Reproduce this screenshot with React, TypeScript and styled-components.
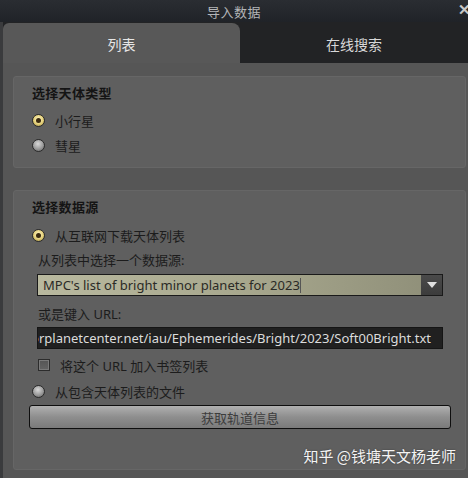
import React from "react";
import styled, { createGlobalStyle } from "styled-components";

const Global = createGlobalStyle`
  html, body { margin: 0; padding: 0; background: #4b4b4b; }
  body { font-family: "Noto Sans", "Noto Sans CJK SC", sans-serif; }
`;

const Frame = styled.div`
  position: relative;
  width: 468px;
  height: 478px;
  overflow: hidden;
  display: flex;
  flex-direction: column;
  background: #4c4c4c;
`;

const TitleBar = styled.div`
  height: 22px;
  flex: none;
  display: grid;
  grid-template-columns: 1fr auto 1fr;
  align-items: center;
  background: linear-gradient(#2a2d32, #202328);
  color: #b4b6b8;
  font-size: 13px;
`;

const Title = styled.div`
  grid-column: 2;
  letter-spacing: 0.5px;
  padding-top: 1px;
`;

const Close = styled.div`
  grid-column: 3;
  justify-self: end;
  margin-right: -3px;
  margin-top: -4px;
  color: #c8c8c8;
  font-size: 15px;
  font-weight: bold;
`;

const Body = styled.div`
  flex: 1;
  display: flex;
  border-left: 3px solid #3a3b3d;
  background: #202224;
`;

const Main = styled.div`
  flex: 1;
  display: flex;
  flex-direction: column;
`;

const TabBar = styled.div`
  height: 41px;
  flex: none;
  display: flex;
  background: #222325;
`;

const Tab = styled.div<{ $active?: boolean }>`
  width: ${(p) => (p.$active ? "237px" : "auto")};
  flex: ${(p) => (p.$active ? "none" : "1")};
  margin-top: ${(p) => (p.$active ? "1px" : "0")};
  display: flex;
  align-items: center;
  justify-content: center;
  font-size: 14px;
  color: ${(p) => (p.$active ? "#e6e6e6" : "#d8d8d8")};
  background: ${(p) => (p.$active ? "#585858" : "#222325")};
  border-radius: ${(p) => (p.$active ? "6px 8px 0 0" : "0")};
  padding-top: 2px;
`;

const Content = styled.div`
  flex: 1;
  background: #565656;
  padding: 13px 2px 8px 10px;
  display: flex;
  flex-direction: column;
  gap: 22px;
`;

const Group = styled.div<{ $grow?: boolean }>`
  background: #5f5f5f;
  border: 1px solid #666;
  border-radius: 3px;
  padding: 7px 0 0 0;
  display: flex;
  flex-direction: column;
  flex: ${(p) => (p.$grow ? "1" : "none")};
  height: ${(p) => (p.$grow ? "auto" : "92px")};
  box-sizing: border-box;
`;

const GroupTitle = styled.div`
  height: 18px;
  line-height: 18px;
  margin-left: 18px;
  font-size: 13px;
  font-weight: bold;
  color: #141414;
  letter-spacing: 0.3px;
`;

const Row = styled.div<{ $h: number; $mt?: number; $indent: number }>`
  height: ${(p) => p.$h}px;
  margin-top: ${(p) => p.$mt ?? 0}px;
  margin-left: ${(p) => p.$indent}px;
  display: flex;
  align-items: center;
  gap: 10px;
  font-size: 13px;
  color: #1c1c1c;
`;

const Radio = styled.span<{ $on?: boolean }>`
  width: 13px;
  height: 13px;
  border-radius: 50%;
  box-sizing: border-box;
  flex: none;
  display: inline-flex;
  align-items: center;
  justify-content: center;
  border: 1px solid #2a2a2a;
  background: ${(p) =>
    p.$on
      ? "radial-gradient(circle at 50% 40%, #fff8c8 0%, #e4cf78 55%, #8a7a38 100%)"
      : "radial-gradient(circle at 45% 35%, #d8d8d8 0%, #9a9a9a 55%, #5a5a5a 100%)"};
  &::after {
    content: "";
    display: ${(p) => (p.$on ? "block" : "none")};
    width: 5px;
    height: 5px;
    border-radius: 50%;
    background: #3a2a10;
  }
`;

const Check = styled.span`
  width: 12px;
  height: 12px;
  flex: none;
  box-sizing: border-box;
  border: 1px solid #2c2c2c;
  background: linear-gradient(#555, #646464);
  box-shadow: inset 0 0 0 1px #7a7a7a;
`;

const Combo = styled.div`
  margin-left: 23px;
  margin-top: 3px;
  width: 406px;
  height: 22px;
  box-sizing: border-box;
  border: 1px solid #1a1a1a;
  display: flex;
  background: linear-gradient(90deg, #b9b99f 0%, #a8a88e 50%, #8e8e78 100%);
`;

const ComboText = styled.div`
  flex: 1;
  padding-left: 5px;
  display: flex;
  align-items: center;
  font-size: 13px;
  color: #2a2a26;
`;

const Caret = styled.span`
  width: 1px;
  height: 15px;
  background: #555;
`;

const ComboArrow = styled.div`
  width: 21px;
  flex: none;
  background: linear-gradient(#4a4a4a, #3c3c3c);
  display: flex;
  align-items: center;
  justify-content: center;
`;

const UrlBox = styled.div`
  margin-left: 23px;
  margin-top: 2px;
  width: 406px;
  height: 22px;
  box-sizing: border-box;
  border: 1px solid #151515;
  background: #202020;
  color: #dcdcdc;
  font-size: 13px;
  display: flex;
  align-items: center;
  justify-content: flex-end;
  padding-right: 11px;
  overflow: hidden;
  white-space: nowrap;
`;

const FetchButton = styled.div`
  margin: 2px 14px 0 15px;
  height: 24px;
  box-sizing: border-box;
  border: 1px solid #0e0e0e;
  border-radius: 3px;
  background: linear-gradient(#b0b0b0 0%, #8e8e8e 50%, #7a7a7a 100%);
  display: flex;
  align-items: center;
  justify-content: center;
  font-size: 13px;
  color: #3c3c3c;
`;

const Watermark = styled.div`
  position: absolute;
  right: 12px;
  bottom: 12px;
  font-size: 15px;
  color: #f4f4f4;
  font-family: "Noto Sans CJK SC", sans-serif;
  text-shadow: 0 0 2px rgba(0,0,0,0.4);
`;

export default function App() {
  return (
    <>
      <Global />
      <Frame>
        <TitleBar>
          <Title>导入数据</Title>
          <Close>✕</Close>
        </TitleBar>
        <Body>
          <Main>
            <TabBar>
              <Tab $active>列表</Tab>
              <Tab>在线搜索</Tab>
            </TabBar>
            <Content>
              <Group>
                <GroupTitle>选择天体类型</GroupTitle>
                <Row $h={25} $mt={6} $indent={18}>
                  <Radio $on />
                  小行星
                </Row>
                <Row $h={25} $indent={18}>
                  <Radio />
                  彗星
                </Row>
              </Group>
              <Group $grow>
                <GroupTitle>选择数据源</GroupTitle>
                <Row $h={24} $mt={7} $indent={18}>
                  <Radio $on />
                  从互联网下载天体列表
                </Row>
                <Row $h={24} $indent={24}>从列表中选择一个数据源:</Row>
                <Combo>
                  <ComboText>
                    MPC's list of bright minor planets for 2023
                    <Caret />
                  </ComboText>
                  <ComboArrow>
                    <svg width="10" height="6" viewBox="0 0 10 6">
                      <path d="M0 0 L10 0 L5 6 Z" fill="#e0e0e0" />
                    </svg>
                  </ComboArrow>
                </Combo>
                <Row $h={24} $mt={5} $indent={24}>或是键入 URL:</Row>
                <UrlBox>https://minorplanetcenter.net/iau/Ephemerides/Bright/2023/Soft00Bright.txt</UrlBox>
                <Row $h={24} $mt={4} $indent={24}>
                  <Check />
                  将这个 URL 加入书签列表
                </Row>
                <Row $h={24} $mt={2} $indent={18}>
                  <Radio />
                  从包含天体列表的文件
                </Row>
                <FetchButton>获取轨道信息</FetchButton>
              </Group>
            </Content>
          </Main>
        </Body>
        <Watermark>知乎 @钱塘天文杨老师</Watermark>
      </Frame>
    </>
  );
}
